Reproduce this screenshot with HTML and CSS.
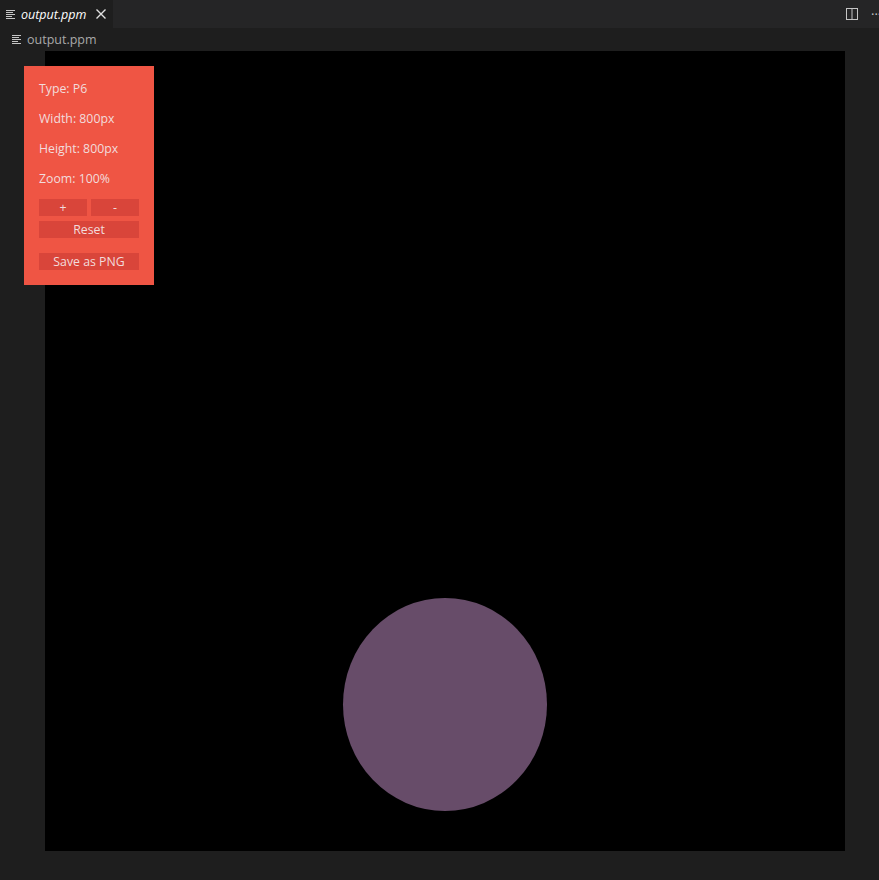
FILE: index.html
```html
<!DOCTYPE html>
<html>
<head>
<meta charset="utf-8">
<link rel="stylesheet" href="styles.css">
</head>
<body>
<div class="tabbar">
  <div class="tab">
    <svg class="ficon" width="10" height="9" viewBox="0 0 10 9"><path d="M0 0.5h9M0 2.5h7M0 4.5h9M0 6.5h6M0 8.5h9" stroke="#c5c5c5" stroke-width="1"/></svg>
    <span class="tabname">output.ppm</span>
    <svg class="close" width="12" height="12" viewBox="0 0 12 12"><path d="M1.5 1.5l9 9M10.5 1.5l-9 9" stroke="#e0e0e0" stroke-width="1.4"/></svg>
  </div>
  <div class="actions">
    <svg class="split" width="14" height="14" viewBox="0 0 14 14"><rect x="1.5" y="1.5" width="11" height="11" fill="none" stroke="#c5c5c5" stroke-width="1"/><path d="M7 1.5v11" stroke="#c5c5c5" stroke-width="1"/></svg>
    <span class="more">···</span>
  </div>
</div>
<div class="crumbs">
  <svg class="ficon" width="10" height="9" viewBox="0 0 10 9"><path d="M0 0.5h9M0 2.5h7M0 4.5h9M0 6.5h6M0 8.5h9" stroke="#c5c5c5" stroke-width="1"/></svg>
  <span class="crumbname">output.ppm</span>
</div>
<div class="viewer">
  <div class="image">
    <div class="circle"></div>
  </div>
  <div class="panel">
    <div class="info">Type: P6</div>
    <div class="info">Width: 800px</div>
    <div class="info">Height: 800px</div>
    <div class="info">Zoom: 100%</div>
    <div class="row">
      <button class="btn">+</button>
      <button class="btn">-</button>
    </div>
    <button class="btn wide">Reset</button>
    <button class="btn wide save">Save as PNG</button>
  </div>
</div>
</body>
</html>
```
FILE: styles.css
```css
html, body {
  margin: 0;
  padding: 0;
  background: #1e1e1e;
  font-family: "Open Sans", "Noto Sans", sans-serif;
  overflow: hidden;
  width: 879px;
  height: 880px;
}
.tabbar {
  height: 28px;
  background: #252526;
  display: flex;
  justify-content: space-between;
}
.tab {
  width: 113px;
  background: #1e1e1e;
  display: flex;
  align-items: center;
  padding-left: 6px;
  box-sizing: border-box;
}
.tabname {
  margin-left: 5px;
  font-style: italic;
  color: #ffffff;
  font-size: 12.5px;
}
.close {
  margin-left: 9px;
}
.actions {
  width: 34px;
  display: flex;
  align-items: center;
  overflow: hidden;
  white-space: nowrap;
}
.split {
  flex: none;
  margin-right: 12px;
}
.more {
  color: #c5c5c5;
  font-size: 13px;
  line-height: 14px;
}
.crumbs {
  height: 23px;
  display: flex;
  align-items: center;
  padding-left: 12px;
}
.crumbname {
  margin-left: 5px;
  color: #a9a9a9;
  font-size: 12.5px;
}
.viewer {
  position: relative;
  padding-left: 45px;
}
.image {
  width: 800px;
  height: 800px;
  background: #000;
  position: relative;
  overflow: hidden;
}
.circle {
  position: absolute;
  left: 298px;
  top: 547px;
  width: 204px;
  height: 213px;
  border-radius: 50%;
  background: #674c69;
}
.panel {
  position: absolute;
  left: 24px;
  top: 15px;
  width: 130px;
  height: 219px;
  box-sizing: border-box;
  background: #ef5544;
  padding: 11px 15px 0 15px;
  display: flex;
  flex-direction: column;
}
.info {
  color: #f2dcdc;
  font-size: 12.3px;
  height: 30px;
  line-height: 24px;
}
.row {
  display: flex;
  gap: 4px;
  margin-top: 2px;
}
.btn {
  border: none;
  margin: 0;
  padding: 0;
  background: #d9453a;
  color: #f2dcdc;
  font-family: "Open Sans", "Noto Sans", sans-serif;
  font-size: 12.3px;
  height: 17px;
  line-height: 17px;
  width: 48px;
}
.wide {
  width: 100px;
  margin-top: 5px;
}
.save {
  margin-top: 15px;
}
```
